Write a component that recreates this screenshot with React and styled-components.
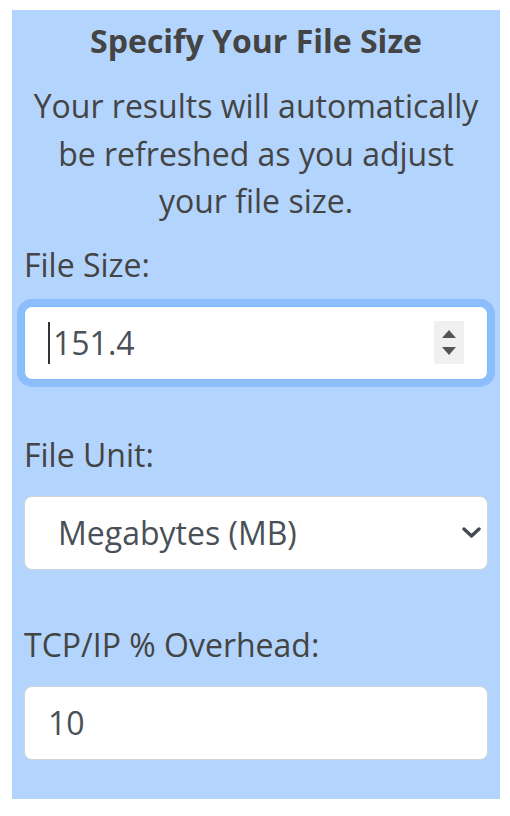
import React from 'react';
import styled, { createGlobalStyle } from 'styled-components';

const GlobalStyle = createGlobalStyle`
  html, body {
    margin: 0;
    background: #ffffff;
    font-family: "Open Sans", "DejaVu Sans", sans-serif;
  }
`;

const Page = styled.div`
  padding: 10px 10px 18px 12px;
`;

const Panel = styled.section`
  width: 488px;
  box-sizing: border-box;
  background: #b3d4fc;
  padding: 9px 12px 39px;
  color: #444;
`;

const Title = styled.h2`
  margin: 0;
  text-align: center;
  font-size: 32px;
  font-weight: 700;
  line-height: 44px;
`;

const Intro = styled.p`
  margin: 19px 0 0;
  text-align: center;
  font-size: 32px;
  line-height: 47.5px;
`;

const Group = styled.div`
  display: flex;
  flex-direction: column;
  margin-top: ${(p) => p.$gap}px;
`;

const Label = styled.label`
  font-size: 32px;
  line-height: 48px;
  margin-bottom: 17px;
`;

const Box = styled.div`
  display: flex;
  align-items: center;
  height: 74px;
  box-sizing: border-box;
  background: #fff;
  border: 1px solid ${(p) => (p.$focused ? '#80bdff' : '#cfd4da')};
  border-radius: 8px;
  box-shadow: ${(p) => (p.$focused ? '0 0 0 7px #8bbefb' : 'none')};
  padding: ${(p) => p.$pad};
`;

const Field = styled.input`
  flex: 1;
  min-width: 0;
  border: 0;
  outline: none;
  background: transparent;
  font-family: inherit;
  font-size: 32px;
  color: #495057;
  padding: 0;
  caret-color: transparent;
  -moz-appearance: textfield;
  &::-webkit-inner-spin-button,
  &::-webkit-outer-spin-button {
    -webkit-appearance: none;
    margin: 0;
  }
`;

const Caret = styled.span`
  width: 2px;
  height: 42px;
  background: #333;
  margin-right: 3px;
`;

const Spinner = styled.div`
  width: 30px;
  height: 43px;
  background: #f0f0f0;
  border-radius: 2px;
  display: flex;
  flex-direction: column;
  align-items: center;
  justify-content: center;
  gap: 9px;
`;

const Picker = styled.select`
  flex: 1;
  min-width: 0;
  border: 0;
  outline: none;
  background: transparent;
  appearance: none;
  -webkit-appearance: none;
  font-family: inherit;
  font-size: 32px;
  color: #495057;
  padding: 0;
`;

const Up = () => (
  <svg width="14" height="8" viewBox="0 0 14 8"><path d="M7 0 L14 8 L0 8 Z" fill="#555" /></svg>
);
const Down = () => (
  <svg width="14" height="8" viewBox="0 0 14 8"><path d="M0 0 L14 0 L7 8 Z" fill="#555" /></svg>
);
const Chevron = () => (
  <svg width="19" height="11" viewBox="0 0 19 11">
    <path d="M2 2 L9.5 9 L17 2" fill="none" stroke="#454a52" strokeWidth="3.4" strokeLinecap="round" strokeLinejoin="round" />
  </svg>
);

export default function App() {
  return (
    <>
      <GlobalStyle />
      <Page>
        <Panel>
          <Title>Specify Your File Size</Title>
          <Intro>
            Your results will automatically
            <br />
            be refreshed as you adjust
            <br />
            your file size.
          </Intro>
          <Group $gap={16}>
            <Label>File Size:</Label>
            <Box $focused $pad="0 23px 0 23px">
              <Caret />
              <Field type="number" defaultValue="151.4" step="0.1" />
              <Spinner>
                <Up />
                <Down />
              </Spinner>
            </Box>
          </Group>
          <Group $gap={51}>
            <Label>File Unit:</Label>
            <Box $pad="0 6px 0 33px">
              <Picker defaultValue="MB">
                <option value="KB">Kilobytes (KB)</option>
                <option value="MB">Megabytes (MB)</option>
                <option value="GB">Gigabytes (GB)</option>
              </Picker>
              <Chevron />
            </Box>
          </Group>
          <Group $gap={51}>
            <Label>TCP/IP % Overhead:</Label>
            <Box $pad="0 23px">
              <Field type="text" defaultValue="10" />
            </Box>
          </Group>
        </Panel>
      </Page>
    </>
  );
}
